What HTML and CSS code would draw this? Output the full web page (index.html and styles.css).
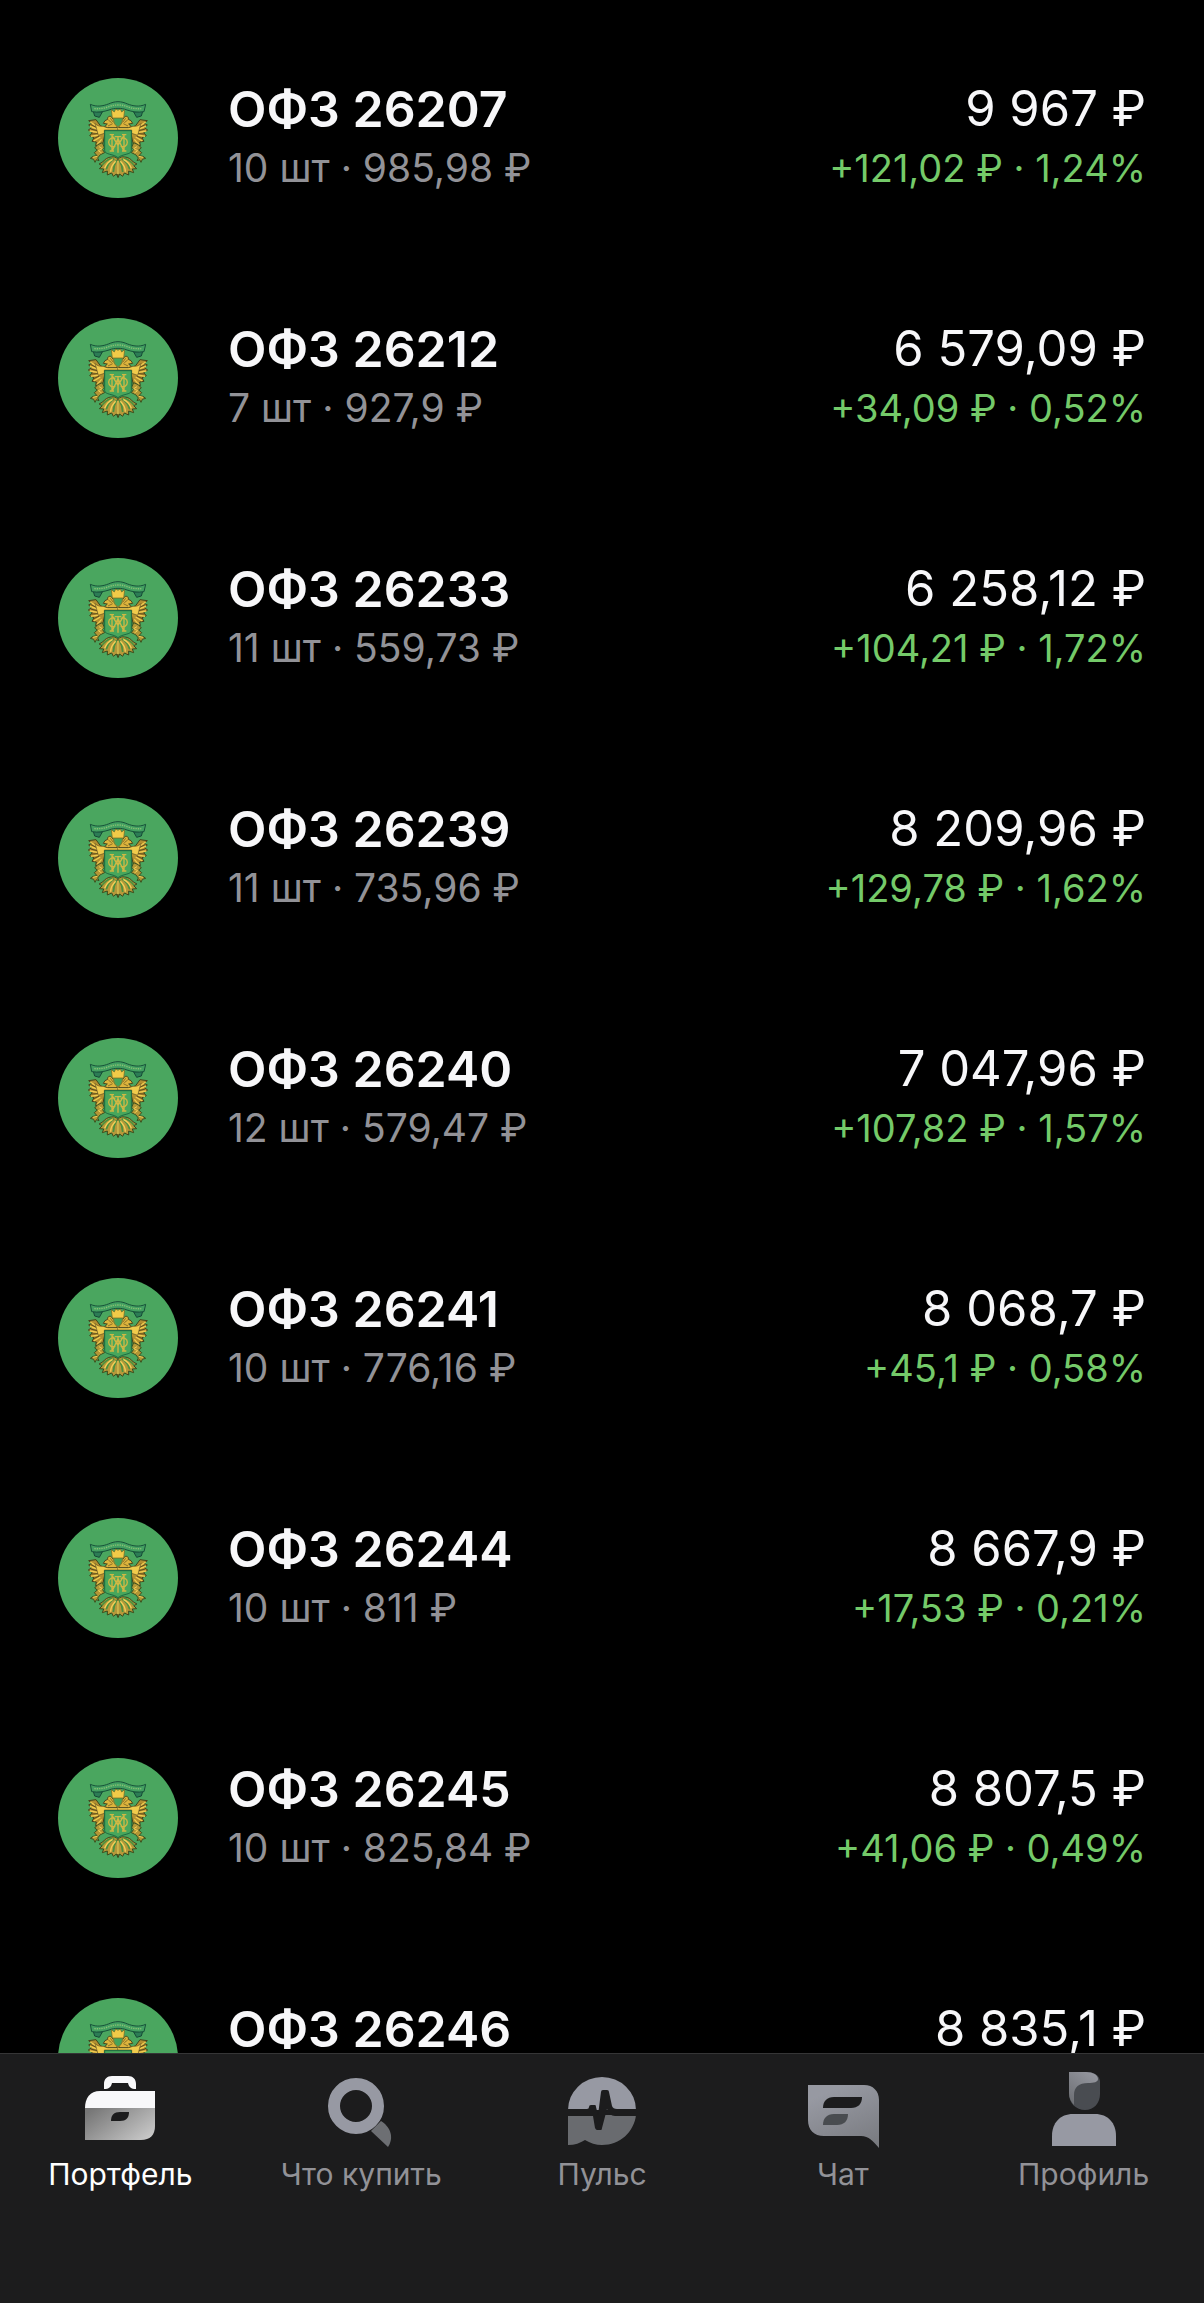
FILE: index.html
```html
<!DOCTYPE html>
<html lang="ru">
<head>
    <meta charset="UTF-8">
    <meta name="viewport" content="width=device-width, initial-scale=1.0">
    <title>Портфель</title>
    <link rel="stylesheet" href="styles.css">
</head>
<body>
    <!-- Shared bond emblem -->
    <svg class="defs" width="0" height="0" aria-hidden="true">
        <symbol id="emblem" viewBox="27 24 360 360">
            <circle cx="207" cy="204" r="180" fill="#4aa65f"/>
            <!-- ribbon -->
            <path d="M133 124l4 14 14 4 9-16zM281 124l-4 14-14 4-9-16z" fill="#2c7d55" stroke="#164936" stroke-width="3"/>
            <path d="M124 103c20 9 38 5 54-1 10-4 18-7 29-7s19 3 29 7c16 6 34 10 54 1l-5 22c-20 3-36 0-51-5-10-4-18-5-27-5s-17 1-27 5c-15 5-32 8-52 5z" fill="#43a061" stroke="#17523a" stroke-width="3"/>
            <path d="M136 116c16 1 30-1 44-6 10-4 18-5 27-5s17 1 27 5c14 5 28 7 43 6" fill="none" stroke="#8cc274" stroke-width="4" stroke-dasharray="4 3"/>
            <g id="wing">
                <!-- outer feathers -->
                <path d="M119 152l10 8-10 5 9 8-10 7 12 8-8 9 13 6-6 11 13 2-2 11 14-2 6 4 7-34v-22l-13-6-13-18z" fill="#b48f30" stroke="#43431a" stroke-width="3"/>
                <path d="M124 156l20 14M123 169l22 8M122 183l24 4M126 199l22-4M134 213l20-12M144 224l14-16" fill="none" stroke="#f0cc50" stroke-width="4"/>
                <path d="M126 164l18 9M125 177l20 5M127 192l20-1M134 206l17-8" fill="none" stroke="#5a4a1b" stroke-width="3"/>
                <!-- shoulder and head -->
                <path d="M138 160c8 11 20 8 32 10l38 2v8h-42v10l-18 6z" fill="#f0cb4c" stroke="#655522" stroke-width="2"/>
                <path d="M168 152l8-4c-2-10 10-12 13-5l6 8 2 10 7 8v4h-28l-9-3 8-8-12-2z" fill="#deb43d" stroke="#49491f" stroke-width="3"/>
                <path d="M178 150l10 8M184 145l9 12M177 168l14-7" fill="none" stroke="#5f501b" stroke-width="2"/>
                <!-- claw -->
                <path d="M146 224l14-6 6 14-6 6 7 10-13 6-8 10 4 8-8-3-4 8-4-9-10-3 8-6 12-2-8-9 9-8-8-6z" fill="#b39636" stroke="#39501f" stroke-width="3"/>
                <path d="M150 230l10 6-12 6 10 7M144 259l-12 3" fill="none" stroke="#f0cf56" stroke-width="3"/>
                <!-- tail feathers -->
                <path d="M207 268c-7-8-12-8-20-7-10 0-20 7-26 15l-11 6 10 5-9 9 13 1-4 11 15-5 0 12 13-6 5 10 9-7 5 10z" fill="#b4983a" stroke="#3a4a1d" stroke-width="3"/>
                <path d="M203 270c-7 13-10 25-10 36M196 266c-14 8-21 19-24 32M189 264c-16 5-23 12-30 22" fill="none" stroke="#4b913f" stroke-width="5"/>
                <path d="M207 272v40M200 274c-12 12-15 22-15 31M191 268c-13 7-20 15-24 27" fill="none" stroke="#f2d058" stroke-width="4"/>
            </g>
            <use href="#wing" transform="matrix(-1 0 0 1 414 0)"/>
            <!-- small shield and crown -->
            <path d="M194 143h26c1 15-4 22-13 27-9-5-14-12-13-27z" fill="#45a45a" stroke="#8c842f" stroke-width="3"/>
            <path d="M187 119l9 7 4-9 7 4 7-4 4 9 9-7-3 25h-34z" fill="#f1ca48" stroke="#6f6423" stroke-width="2"/>
            <!-- main shield -->
            <path d="M167 182h80v60c0 12-28 10-40 21-12-11-40-9-40-21z" fill="#48a65b" stroke="#1d6941" stroke-width="3"/>
            <!-- monogram ornament -->
            <g fill="none" stroke="#cfb844" stroke-width="4">
                <path d="M189 194v48M225 194v48M189 196l18 30 18-30M190 242l17-36 17 36M207 200v48M197 200h20"/>
                <path d="M199 206c-8-5-20-1-20 11s12 16 20 11M215 206c8-5 20-1 20 11s-12 16-20 11"/>
                <path d="M182 194h13M219 194h13M182 243h13M219 243h13"/>
            </g>
        </symbol>
    </svg>

    <main class="portfolio">
        <ul class="bonds">
            <li class="bond">
                <svg class="logo" aria-hidden="true"><use href="#emblem"/></svg>
                <div class="info">
                    <div class="name">ОФЗ 26207</div>
                    <div class="amount">10 шт · 985,98 ₽</div>
                </div>
                <div class="value">
                    <div class="total">9 967 ₽</div>
                    <div class="profit">+121,02 ₽ · 1,24%</div>
                </div>
            </li>
            <li class="bond">
                <svg class="logo" aria-hidden="true"><use href="#emblem"/></svg>
                <div class="info">
                    <div class="name">ОФЗ 26212</div>
                    <div class="amount">7 шт · 927,9 ₽</div>
                </div>
                <div class="value">
                    <div class="total">6 579,09 ₽</div>
                    <div class="profit">+34,09 ₽ · 0,52%</div>
                </div>
            </li>
            <li class="bond">
                <svg class="logo" aria-hidden="true"><use href="#emblem"/></svg>
                <div class="info">
                    <div class="name">ОФЗ 26233</div>
                    <div class="amount">11 шт · 559,73 ₽</div>
                </div>
                <div class="value">
                    <div class="total">6 258,12 ₽</div>
                    <div class="profit">+104,21 ₽ · 1,72%</div>
                </div>
            </li>
            <li class="bond">
                <svg class="logo" aria-hidden="true"><use href="#emblem"/></svg>
                <div class="info">
                    <div class="name">ОФЗ 26239</div>
                    <div class="amount">11 шт · 735,96 ₽</div>
                </div>
                <div class="value">
                    <div class="total">8 209,96 ₽</div>
                    <div class="profit">+129,78 ₽ · 1,62%</div>
                </div>
            </li>
            <li class="bond">
                <svg class="logo" aria-hidden="true"><use href="#emblem"/></svg>
                <div class="info">
                    <div class="name">ОФЗ 26240</div>
                    <div class="amount">12 шт · 579,47 ₽</div>
                </div>
                <div class="value">
                    <div class="total">7 047,96 ₽</div>
                    <div class="profit">+107,82 ₽ · 1,57%</div>
                </div>
            </li>
            <li class="bond">
                <svg class="logo" aria-hidden="true"><use href="#emblem"/></svg>
                <div class="info">
                    <div class="name">ОФЗ 26241</div>
                    <div class="amount">10 шт · 776,16 ₽</div>
                </div>
                <div class="value">
                    <div class="total">8 068,7 ₽</div>
                    <div class="profit">+45,1 ₽ · 0,58%</div>
                </div>
            </li>
            <li class="bond">
                <svg class="logo" aria-hidden="true"><use href="#emblem"/></svg>
                <div class="info">
                    <div class="name">ОФЗ 26244</div>
                    <div class="amount">10 шт · 811 ₽</div>
                </div>
                <div class="value">
                    <div class="total">8 667,9 ₽</div>
                    <div class="profit">+17,53 ₽ · 0,21%</div>
                </div>
            </li>
            <li class="bond">
                <svg class="logo" aria-hidden="true"><use href="#emblem"/></svg>
                <div class="info">
                    <div class="name">ОФЗ 26245</div>
                    <div class="amount">10 шт · 825,84 ₽</div>
                </div>
                <div class="value">
                    <div class="total">8 807,5 ₽</div>
                    <div class="profit">+41,06 ₽ · 0,49%</div>
                </div>
            </li>
            <li class="bond">
                <svg class="logo" aria-hidden="true"><use href="#emblem"/></svg>
                <div class="info">
                    <div class="name">ОФЗ 26246</div>
                </div>
                <div class="value">
                    <div class="total">8 835,1 ₽</div>
                </div>
            </li>
        </ul>
    </main>

    <nav class="tabbar">
        <a class="tab active" href="#portfolio">
            <svg class="tab-icon" viewBox="0 0 80 80" aria-hidden="true">
                <defs>
                    <linearGradient id="case" x1="0" y1="0.2" x2="1" y2="0.8">
                        <stop offset="0" stop-color="#777"/>
                        <stop offset="1" stop-color="#c8c8c8"/>
                    </linearGradient>
                </defs>
                <path d="M24 21v-5c0-5 3-8 8-8h16c5 0 8 3 8 8v5c-5 0-7-2-8-6H32c-1 4-3 6-8 6z" fill="#f8f8fa"/>
                <path d="M5 40c0-10 5-17 15-17h55v17z" fill="#f8f8fa"/>
                <path d="M5 40h70v18c0 9-5 14-14 14H5z" fill="url(#case)"/>
                <path d="M31 53c0-6 3-9 9-9h9c0 6-3 9-9 9z" fill="#1c1c1d"/>
            </svg>
            <span>Портфель</span>
        </a>
        <a class="tab" href="#buy">
            <svg class="tab-icon" viewBox="0 0 80 80" aria-hidden="true">
                <path d="M50 63l10-10c8 5 14 15 7 26z" fill="#6d6f73"/>
                <circle cx="35" cy="38" r="22" fill="none" stroke="#9799a3" stroke-width="12"/>
            </svg>
            <span>Что купить</span>
        </a>
        <a class="tab" href="#pulse">
            <svg class="tab-icon" viewBox="0 0 80 80" aria-hidden="true">
                <path d="M6 42a34 33 0 0 1 68 0z" fill="#9799a3"/>
                <path d="M6 47h68c-2 17-16 30-34 30-6 0-12-2-17-5-5 3-10 5-17 5z" fill="#696b6f"/>
                <path d="M5 41h20q2 0 2-2 0-2 2-2h4q1 0 1 2l2 8 3-23q0-2 2-2h4q2 0 2 2l3 14q1 3 5 3h20v7H53q-6 0-8-7l-5 19q0 2-1 2h-4q-1 0-2-2l-2-12H5z" fill="#1c1c1d"/>
            </svg>
            <span>Пульс</span>
        </a>
        <a class="tab" href="#chat">
            <svg class="tab-icon" viewBox="0 0 80 80" aria-hidden="true">
                <defs>
                    <linearGradient id="bubble" x1="0.5" y1="0" x2="1" y2="1">
                        <stop offset="0" stop-color="#9799a2"/>
                        <stop offset="1" stop-color="#77797e"/>
                    </linearGradient>
                </defs>
                <path d="M5 17h56c9 0 15 6 15 15v48C70 73 66 68 58 68H21C11 68 5 62 5 52z" fill="url(#bubble)"/>
                <path d="M20 40c0-7 4-11 11-11h28c0 7-4 11-11 11z" fill="#1c1c1d"/>
                <path d="M20 57c0-7 4-11 11-11h14c0 7-4 11-11 11z" fill="#494c50"/>
            </svg>
            <span>Чат</span>
        </a>
        <a class="tab" href="#profile">
            <svg class="tab-icon" viewBox="0 0 80 80" aria-hidden="true">
                <defs>
                    <linearGradient id="hair" x1="0.8" y1="0" x2="0.1" y2="1">
                        <stop offset="0" stop-color="#95979f"/>
                        <stop offset="1" stop-color="#6c6e73"/>
                    </linearGradient>
                </defs>
                <path d="M25 4h17c8 0 13 3 14 9v13c0 9-6 16-15 16s-16-7-16-16z" fill="#494c51"/>
                <path d="M25 4h17c7 0 12 3 12 7 0 3-4 4-10 4-9 0-14 4-14 12v10c-3-3-5-7-5-12z" fill="url(#hair)"/>
                <path d="M8 78V68c0-13 8-22 21-22h22c13 0 21 9 21 22v10z" fill="#9799a3"/>
            </svg>
            <span>Профиль</span>
        </a>
    </nav>
</body>
</html>
```
FILE: styles.css
```css
* {
    box-sizing: border-box;
}
body {
    font-family: Inter, "Liberation Sans", sans-serif;
    margin: 0;
    background-color: #000;
    color: #f7f7f9;
    display: flex;
    flex-direction: column;
    height: 100vh;
    overflow: hidden;
}
.defs {
    position: absolute;
}
.portfolio {
    flex: 1;
    min-height: 0;
    overflow: hidden;
}
.bonds {
    list-style: none;
    margin: 0;
    padding: 18px 58px 0;
}
.bond {
    display: flex;
    padding: 60px 0;
    white-space: nowrap;
}
.logo {
    width: 120px;
    height: 120px;
    flex-shrink: 0;
    margin-right: 50px;
}
.info {
    flex: 1;
}
.value {
    text-align: right;
}
.name,
.total {
    font-size: 50px;
    line-height: 62px;
}
.name {
    font-weight: 600;
}
.total {
    font-size: 49px;
}
.amount,
.profit {
    line-height: 56px;
}
.amount {
    font-size: 39px;
    color: #929297;
}
.profit {
    font-size: 38px;
    color: #74ca69;
}
.tabbar {
    display: grid;
    grid-template-columns: repeat(5, 1fr);
    padding: 14px 0 109px;
    background-color: #1c1c1d;
    border-top: 1px solid #353536;
}
.tab {
    display: flex;
    flex-direction: column;
    align-items: center;
    gap: 6px;
    color: #929297;
    font-size: 30px;
    line-height: 40px;
    text-decoration: none;
}
.tab.active {
    color: #fff;
}
.tab-icon {
    width: 80px;
    height: 80px;
}
```
